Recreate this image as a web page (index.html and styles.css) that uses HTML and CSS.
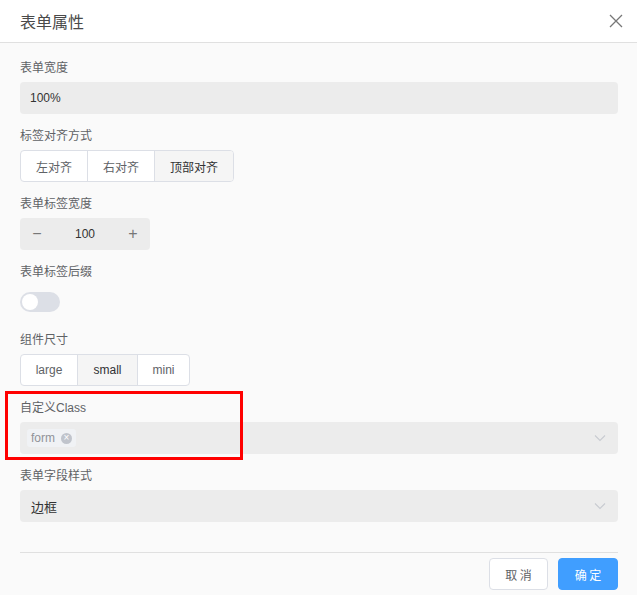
FILE: index.html
```html
<!DOCTYPE html>
<html lang="zh-CN">
<head>
  <meta charset="UTF-8">
  <title>表单属性</title>
  <link rel="stylesheet" href="styles.css">
</head>
<body>
  <div class="dialog">
    <div class="dialog-header">
      <span class="dialog-title">表单属性</span>
      <svg class="close" width="14" height="14" viewBox="0 0 14 14"><path d="M1 1L13 13M13 1L1 13" stroke="#777" stroke-width="1.3" fill="none"/></svg>
    </div>

    <div class="dialog-body">
      <div class="form-item">
        <div class="label">表单宽度</div>
        <div class="input">100%</div>
      </div>

      <div class="form-item">
        <div class="label">标签对齐方式</div>
        <div class="radio-group">
          <span class="radio cn">左对齐</span>
          <span class="radio cn">右对齐</span>
          <span class="radio cn active">顶部对齐</span>
        </div>
      </div>

      <div class="form-item">
        <div class="label">表单标签宽度</div>
        <div class="input-number">
          <span class="step">−</span>
          <span class="num">100</span>
          <span class="step">+</span>
        </div>
      </div>

      <div class="form-item">
        <div class="label">表单标签后缀</div>
        <div class="switch-row"><span class="switch"><span class="knob"></span></span></div>
      </div>

      <div class="form-item">
        <div class="label">组件尺寸</div>
        <div class="radio-group">
          <span class="radio size-large">large</span>
          <span class="radio size-small active">small</span>
          <span class="radio size-mini">mini</span>
        </div>
      </div>

      <div class="form-item">
        <div class="label">自定义Class</div>
        <div class="input select">
          <span class="tag">form<span class="tag-close">×</span></span>
          <svg class="arrow" width="12" height="8" viewBox="0 0 12 8"><path d="M1 1.5L6 6.5L11 1.5" stroke="#c8cbd1" stroke-width="1.1" fill="none"/></svg>
        </div>
      </div>

      <div class="form-item">
        <div class="label">表单字段样式</div>
        <div class="input select">
          <span>边框</span>
          <svg class="arrow" width="12" height="8" viewBox="0 0 12 8"><path d="M1 1.5L6 6.5L11 1.5" stroke="#c8cbd1" stroke-width="1.1" fill="none"/></svg>
        </div>
      </div>
    </div>

    <div class="dialog-footer">
      <button class="btn">取 消</button>
      <button class="btn primary">确 定</button>
    </div>

    <div class="highlight"></div>
  </div>
</body>
</html>
```

FILE: styles.css
```css
body {
  margin: 0;
  overflow: hidden;
  font-family: "Liberation Sans", "Noto Sans CJK SC", sans-serif;
  font-size: 12px;
  color: #606266;
}

.dialog {
  position: relative;
  width: 637px;
  height: 595px;
  background: #fafafa;
  display: flex;
  flex-direction: column;
}

.dialog-header {
  height: 42px;
  background: #fff;
  border-bottom: 1px solid #e0e0e0;
  display: flex;
  align-items: center;
  justify-content: space-between;
  padding: 0 14px 0 20px;
}

.dialog-title {
  font-size: 16px;
  color: #4a4a4a;
}

.dialog-body {
  flex: 1;
  padding: 15px 19px 0 20px;
}

.form-item {
  margin-bottom: 12px;
}

.label {
  line-height: 20px;
  padding-bottom: 4px;
  color: #5f6266;
}

.input {
  height: 32px;
  background: #ececec;
  border-radius: 4px;
  display: flex;
  align-items: center;
  padding: 0 10px;
  color: #333;
}

.select {
  justify-content: space-between;
  padding: 0 12px 0 11px;
}

.select span {
  font-size: 13px;
}

.radio-group {
  display: inline-flex;
  height: 32px;
  box-sizing: border-box;
  border: 1px solid #dcdfe6;
  border-radius: 4px;
  background: #fff;
  overflow: hidden;
}

.radio {
  display: flex;
  align-items: center;
  justify-content: center;
  border-left: 1px solid #dcdfe6;
  color: #606266;
}

.radio:first-child {
  border-left: none;
}

.radio.cn { width: 66px; }
.radio.cn.active { width: 78px; }
.size-large { width: 56px; }
.size-small { width: 59px; }
.size-mini { width: 51px; }

.radio.active {
  background: #f5f5f5;
  color: #303133;
}

.input-number {
  width: 130px;
  height: 32px;
  background: #ececec;
  border-radius: 4px;
  display: flex;
  align-items: center;
  color: #333;
}

.step {
  width: 34px;
  text-align: center;
  font-size: 16px;
  color: #777;
}

.num {
  flex: 1;
  text-align: center;
}

.switch-row {
  height: 32px;
  display: flex;
  align-items: center;
}

.switch {
  width: 40px;
  height: 20px;
  border-radius: 10px;
  background: #dcdfe6;
  position: relative;
}

.knob {
  position: absolute;
  left: 2px;
  top: 2px;
  width: 16px;
  height: 16px;
  border-radius: 50%;
  background: #fff;
}

.tag {
  display: inline-flex;
  align-items: center;
  height: 18px;
  padding: 0 4px 0 4px;
  margin-left: -4px;
  background: #f0f2f5;
  border-radius: 3px;
  color: #909399;
  font-size: 12px;
}

.select .tag {
  font-size: 12px;
}

.tag-close {
  display: inline-flex;
  align-items: center;
  justify-content: center;
  width: 11px;
  height: 11px;
  margin-left: 6px;
  border-radius: 50%;
  background: #c0c4cc;
  color: #fff;
  font-size: 10px;
  line-height: 1;
}

.select .tag .tag-close {
  font-size: 10px;
}

.dialog-footer {
  margin: 0 19px 0 20px;
  border-top: 1px solid #e0e0e0;
  padding: 5px 0 5px;
  display: flex;
  justify-content: flex-end;
  gap: 10px;
}

.btn {
  height: 32px;
  padding: 0 15px;
  border-radius: 4px;
  border: 1px solid #dcdfe6;
  background: #fff;
  color: #606266;
  font-family: "Noto Sans CJK SC", sans-serif;
  font-size: 12px;
  width: 59px;
}

.btn.primary {
  background: #409eff;
  border-color: #409eff;
  color: #fff;
  width: 60px;
}

.highlight {
  position: absolute;
  left: 5px;
  top: 391px;
  width: 232px;
  height: 63px;
  border: 3px solid #f00;
}
```
